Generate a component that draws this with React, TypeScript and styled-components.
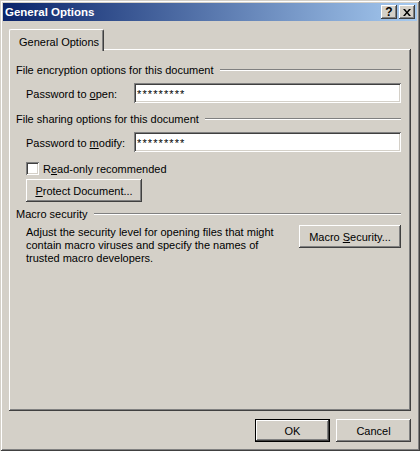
import React from 'react';
import styled, { createGlobalStyle } from 'styled-components';

const GlobalStyle = createGlobalStyle`
  html, body {
    margin: 0;
    padding: 0;
    background: #d4d0c8;
  }
  body {
    font-family: "Liberation Sans", Arial, sans-serif;
    font-size: 11px;
    color: #000;
  }
`;

const raised = `
  box-shadow:
    inset -1px -1px 0 #404040,
    inset 1px 1px 0 #ffffff,
    inset -2px -2px 0 #808080,
    inset 2px 2px 0 #d4d0c8;
`;

const sunken = `
  box-shadow:
    inset 1px 1px 0 #808080,
    inset -1px -1px 0 #ffffff,
    inset 2px 2px 0 #404040,
    inset -2px -2px 0 #d4d0c8;
`;

const Window = styled.div`
  width: 420px;
  height: 451px;
  box-sizing: border-box;
  padding: 3px;
  background: #d4d0c8;
  display: flex;
  flex-direction: column;
  box-shadow:
    inset 1px 1px 0 #d4d0c8,
    inset -1px -1px 0 #404040,
    inset 2px 2px 0 #ffffff,
    inset -2px -2px 0 #808080;
`;

const TitleBar = styled.div`
  height: 18px;
  display: flex;
  align-items: center;
  padding: 0 2px;
  background: linear-gradient(to right, #0a246a, #a6caf0);
  color: #fff;
  font-weight: bold;
  font-size: 11.5px;
`;

const Title = styled.div`
  flex: 1;
`;

const TitleButton = styled.div`
  width: 16px;
  height: 14px;
  box-sizing: border-box;
  margin-left: 2px;
  background: #d4d0c8;
  color: #000;
  font-size: 12px;
  font-weight: bold;
  display: flex;
  align-items: center;
  justify-content: center;
  ${raised}
`;

const Body = styled.div`
  flex: 1;
  padding: 8px 6px 0 6px;
  display: flex;
  flex-direction: column;
`;

const TabStrip = styled.div`
  display: flex;
  height: 21px;
  position: relative;
  z-index: 1;
  margin-bottom: -1px;
`;

const Tab = styled.div`
  width: 95px;
  height: 22px;
  box-sizing: border-box;
  padding: 6px 0 0 9px;
  background: #d4d0c8;
  border-top: 1px solid #fff;
  border-left: 1px solid #fff;
  border-right: 1px solid #404040;
  border-radius: 2px 2px 0 0;
  box-shadow: inset -1px 0 0 #808080;
`;

const Panel = styled.div`
  height: 362px;
  box-sizing: border-box;
  padding: 13px 10px 0 7px;
  display: flex;
  flex-direction: column;
  box-shadow:
    inset -1px -1px 0 #404040,
    inset 1px 1px 0 #ffffff,
    inset -2px -2px 0 #808080;
`;

const GroupHeader = styled.div<{ $top: number }>`
  display: flex;
  align-items: center;
  height: 14px;
  padding-top: 1px;
  margin-top: ${(p) => p.$top}px;
  white-space: nowrap;
`;

const Etch = styled.div`
  flex: 1;
  margin: 0 0 1px 6px;
  border-top: 1px solid #808080;
  border-bottom: 1px solid #ffffff;
`;

const FieldRow = styled.div<{ $top: number }>`
  display: flex;
  align-items: center;
  margin: ${(p) => p.$top}px 0 0 10px;
`;

const FieldLabel = styled.div`
  width: 108px;
  padding-top: 1px;
`;

const PasswordBox = styled.div`
  flex: 1;
  height: 20px;
  box-sizing: border-box;
  padding: 5px 0 0 3px;
  background: #fff;
  letter-spacing: 1.1px;
  ${sunken}
`;

const CheckRow = styled.div`
  display: flex;
  align-items: center;
  gap: 4px;
  height: 13px;
  margin: 10px 0 0 10px;
`;

const CheckBox = styled.div`
  width: 13px;
  height: 13px;
  box-sizing: border-box;
  background: #fff;
  ${sunken}
`;

const Button = styled.button<{ $width: number; $default?: boolean }>`
  width: ${(p) => p.$width}px;
  height: 23px;
  box-sizing: border-box;
  padding: 1px 0 0;
  background: #d4d0c8;
  font-family: "Liberation Sans", Arial, sans-serif;
  font-size: 11px;
  color: #000;
  border: ${(p) => (p.$default ? '1px solid #000' : 'none')};
  ${raised}
`;

const ButtonLine = styled.div`
  margin: 4px 0 0 10px;
`;

const MacroRow = styled.div`
  display: flex;
  align-items: flex-start;
  margin: 4px 0 0 10px;
`;

const MacroText = styled.div`
  flex: 1;
  padding-top: 1px;
  line-height: 13px;
  white-space: nowrap;
`;

const Footer = styled.div`
  display: flex;
  justify-content: flex-end;
  gap: 6px;
  padding-top: 8px;
`;

const Key = styled.span`
  text-decoration: underline;
`;

export default function App() {
  return (
    <>
      <GlobalStyle />
      <Window>
        <TitleBar>
          <Title>General Options</Title>
          <TitleButton>?</TitleButton>
          <TitleButton>
            <svg width="8" height="7" viewBox="0 0 8 7">
              <path d="M0 0h2l2 2.5L6 0h2L5 3.5 8 7H6L4 4.5 2 7H0l3-3.5z" fill="#000" />
            </svg>
          </TitleButton>
        </TitleBar>
        <Body>
          <TabStrip>
            <Tab>General Options</Tab>
          </TabStrip>
          <Panel>
            <GroupHeader $top={0}>
              File encryption options for this document
              <Etch />
            </GroupHeader>
            <FieldRow $top={6}>
              <FieldLabel>
                Password to <Key>o</Key>pen:
              </FieldLabel>
              <PasswordBox>*********</PasswordBox>
            </FieldRow>
            <GroupHeader $top={8}>
              File sharing options for this document
              <Etch />
            </GroupHeader>
            <FieldRow $top={6}>
              <FieldLabel>
                Password to <Key>m</Key>odify:
              </FieldLabel>
              <PasswordBox>*********</PasswordBox>
            </FieldRow>
            <CheckRow>
              <CheckBox />
              <span>
                R<Key>e</Key>ad-only recommended
              </span>
            </CheckRow>
            <ButtonLine>
              <Button $width={116}>
                <Key>P</Key>rotect Document...
              </Button>
            </ButtonLine>
            <GroupHeader $top={4}>
              Macro security
              <Etch />
            </GroupHeader>
            <MacroRow>
              <MacroText>
                Adjust the security level for opening files that might
                <br />
                contain macro viruses and specify the names of
                <br />
                trusted macro developers.
              </MacroText>
              <Button $width={102}>
                Macro <Key>S</Key>ecurity...
              </Button>
            </MacroRow>
          </Panel>
          <Footer>
            <Button $width={75} $default>
              OK
            </Button>
            <Button $width={75}>Cancel</Button>
          </Footer>
        </Body>
      </Window>
    </>
  );
}
